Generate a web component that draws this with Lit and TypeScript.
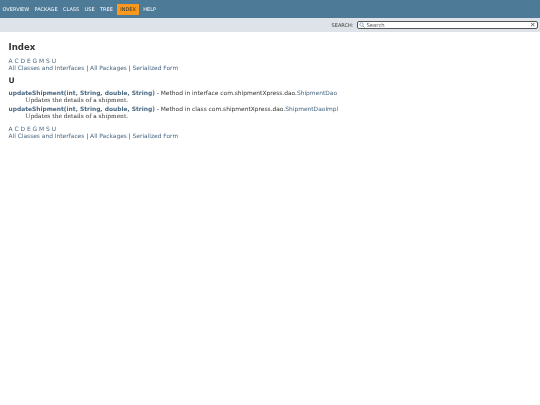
import { LitElement, html, css } from "lit";
import { customElement } from "lit/decorators.js";

@customElement("app-root")
export class AppRoot extends LitElement {
  static styles = css`
    :host { display: block; width: 540px; height: 405px; background: #fff; color: #353833; font-family: "DejaVu Sans", sans-serif; font-size: 5.92px; overflow: hidden; filter: blur(0.4px); }
    a { color: #4a6782; text-decoration: none; }
    .top { background: #4d7a97; height: 18px; display: flex; align-items: center; padding-left: 2.5px; gap: 5.4px; color: #fff; font-size: 5px; }
    .top .on { background: #f8981d; color: #253441; padding: 2.5px 3px; margin: 0 -1px; }
    .sub { background: #dee3e9; height: 14px; display: flex; justify-content: flex-end; align-items: center; gap: 3px; padding-right: 2.5px; font-size: 5px; }
    .box { width: 181px; height: 8.5px; box-sizing: border-box; border: 1px solid #555; border-radius: 2px; background: #fff; display: flex; align-items: center; font-size: 5.3px; color: #555; gap: 2px; padding: 0 1px; }
    .box svg { flex: none; }
    .box .t { flex: 1; }
    .box .x { font-size: 6.5px; line-height: 1; }
    main { padding: 0 8.5px; }
    h1 { font-size: 8.6px; margin: 9px 0 5px; line-height: 12px; }
    .line { line-height: 7px; }
    h2 { font-size: 7.6px; margin: 4px 0 3.5px; line-height: 10px; }
    .entry { margin-bottom: 1.5px; line-height: 7.5px; }
    .desc { font-family: "DejaVu Serif", serif; font-size: 5.9px; line-height: 7px; margin-left: 17px; }
    .foot { margin-top: 5.5px; }
  `;

  private nav() {
    return html`<div class="line"><a>A</a> <a>C</a> <a>D</a> <a>E</a> <a>G</a> <a>M</a> <a>S</a> <a>U</a></div>
      <div class="line"><a>All Classes and Interfaces</a> | <a>All Packages</a> | <a>Serialized Form</a></div>`;
  }

  render() {
    return html`
      <div class="top">
        <span>OVERVIEW</span><span>PACKAGE</span><span>CLASS</span><span>USE</span><span>TREE</span><span class="on">INDEX</span><span>HELP</span>
      </div>
      <div class="sub">
        <span>SEARCH:</span>
        <div class="box">
          <svg width="6" height="6" viewBox="0 0 6 6"><circle cx="2.5" cy="2.5" r="1.7" fill="none" stroke="#7aa0c0" stroke-width=".8"/><line x1="3.8" y1="3.8" x2="5.6" y2="5.6" stroke="#888" stroke-width=".9"/></svg>
          <span class="t">Search</span><span class="x">✕</span>
        </div>
      </div>
      <main>
        <h1>Index</h1>
        ${this.nav()}
        <h2>U</h2>
        <div class="entry">
          <div><b><a>updateShipment(int, String, double, String)</a></b> - Method in interface com.shipmentXpress.dao.<a>ShipmentDao</a></div>
          <div class="desc">Updates the details of a shipment.</div>
        </div>
        <div class="entry">
          <div><b><a>updateShipment(int, String, double, String)</a></b> - Method in class com.shipmentXpress.dao.<a>ShipmentDaoImpl</a></div>
          <div class="desc">Updates the details of a shipment.</div>
        </div>
        <div class="foot">${this.nav()}</div>
      </main>
    `;
  }
}
